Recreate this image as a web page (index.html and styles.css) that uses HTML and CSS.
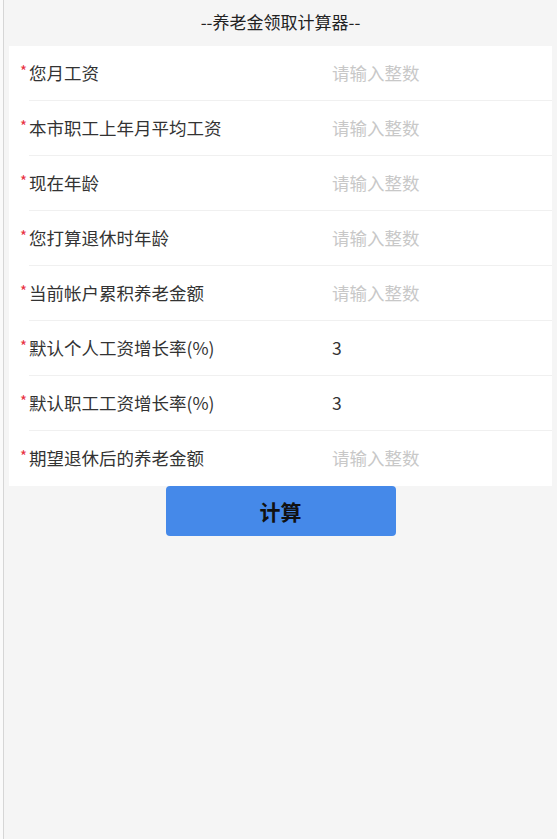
FILE: index.html
```html
<!DOCTYPE html>
<html lang="zh-CN">
<head>
<meta charset="utf-8">
<title>养老金领取计算器</title>
<link rel="stylesheet" href="styles.css">
</head>
<body>
<div class="page">
  <div class="edge"></div>
  <main class="main">
    <h1 class="title">--养老金领取计算器--</h1>
    <div class="card">
      <div class="row"><span class="star">*</span><span class="label">您月工资</span><span class="value placeholder">请输入整数</span></div>
      <div class="row"><span class="star">*</span><span class="label">本市职工上年月平均工资</span><span class="value placeholder">请输入整数</span></div>
      <div class="row"><span class="star">*</span><span class="label">现在年龄</span><span class="value placeholder">请输入整数</span></div>
      <div class="row"><span class="star">*</span><span class="label">您打算退休时年龄</span><span class="value placeholder">请输入整数</span></div>
      <div class="row"><span class="star">*</span><span class="label">当前帐户累积养老金额</span><span class="value placeholder">请输入整数</span></div>
      <div class="row"><span class="star">*</span><span class="label">默认个人工资增长率(%)</span><span class="value">3</span></div>
      <div class="row"><span class="star">*</span><span class="label">默认职工工资增长率(%)</span><span class="value">3</span></div>
      <div class="row last"><span class="star">*</span><span class="label">期望退休后的养老金额</span><span class="value placeholder">请输入整数</span></div>
    </div>
    <button class="btn" type="button">计算</button>
  </main>
</div>
</body>
</html>
```
FILE: styles.css
```css
html, body {
  margin: 0;
  padding: 0;
  background: #f5f5f5;
  font-family: "Noto Sans CJK SC", "Noto Sans", sans-serif;
  color: #333;
}
.page {
  display: flex;
  min-height: 839px;
}
.edge {
  width: 3px;
  flex: none;
  background: #fafafa;
  border-right: 1px solid #d6d6d6;
}
.main {
  flex: 1;
  padding: 0 5px;
  display: flex;
  flex-direction: column;
}
.title {
  margin: 0;
  height: 46px;
  line-height: 44px;
  text-align: center;
  font-size: 17px;
  font-weight: normal;
  color: #222;
}
.card {
  background: #fff;
}
.row {
  position: relative;
  display: flex;
  align-items: center;
  height: 55px;
  padding-left: 11px;
  padding-bottom: 3px;
  box-sizing: border-box;
  font-size: 17.5px;
}
.row::after {
  content: "";
  position: absolute;
  left: 20px;
  right: 0;
  bottom: 0;
  border-bottom: 1px solid #f0f0f0;
}
.row.last::after {
  display: none;
}
.star {
  width: 9px;
  color: #e8303f;
  font-size: 15px;
  margin-top: -3px;
}
.label {
  width: 303px;
  color: #333;
}
.value {
  color: #333;
}
.placeholder {
  color: #c8c8c8;
}
.btn {
  align-self: center;
  width: 230px;
  height: 50px;
  margin-top: 0;
  border: none;
  border-radius: 4px;
  background: #4589e9;
  color: #111;
  font-family: "Noto Sans CJK SC", sans-serif;
  font-size: 21px;
  font-weight: bold;
}
```
